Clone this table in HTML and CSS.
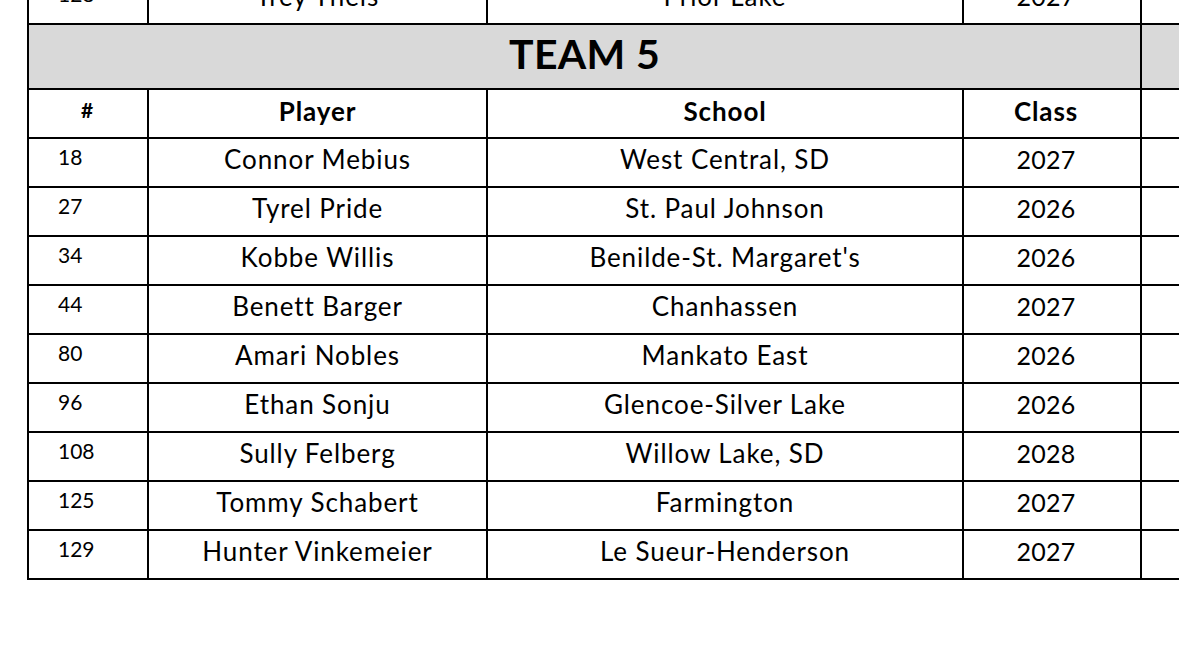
FILE: index.html
```html
<!DOCTYPE html>
<html>
<head>
<meta charset="utf-8">
<link rel="stylesheet" href="styles.css">
</head>
<body>
<div class="sheet">
<table class="roster">
  <colgroup>
    <col class="c-num"><col class="c-player"><col class="c-school"><col class="c-class"><col class="c-extra">
  </colgroup>
  <tr class="row prev">
    <td class="num">128</td><td>Trey Theis</td><td>Prior Lake</td><td class="yr">2027</td><td></td>
  </tr>
  <tr class="team">
    <td colspan="4">TEAM 5</td><td></td>
  </tr>
  <tr class="head">
    <th class="hnum">#</th><th>Player</th><th>School</th><th class="hyr">Class</th><td></td>
  </tr>
  <tr class="row"><td class="num">18</td><td>Connor Mebius</td><td>West Central, SD</td><td class="yr">2027</td><td></td></tr>
  <tr class="row"><td class="num">27</td><td>Tyrel Pride</td><td>St. Paul Johnson</td><td class="yr">2026</td><td></td></tr>
  <tr class="row"><td class="num">34</td><td>Kobbe Willis</td><td>Benilde-St. Margaret's</td><td class="yr">2026</td><td></td></tr>
  <tr class="row"><td class="num">44</td><td>Benett Barger</td><td>Chanhassen</td><td class="yr">2027</td><td></td></tr>
  <tr class="row"><td class="num">80</td><td>Amari Nobles</td><td>Mankato East</td><td class="yr">2026</td><td></td></tr>
  <tr class="row"><td class="num">96</td><td>Ethan Sonju</td><td>Glencoe-Silver Lake</td><td class="yr">2026</td><td></td></tr>
  <tr class="row"><td class="num">108</td><td>Sully Felberg</td><td>Willow Lake, SD</td><td class="yr">2028</td><td></td></tr>
  <tr class="row"><td class="num">125</td><td>Tommy Schabert</td><td>Farmington</td><td class="yr">2027</td><td></td></tr>
  <tr class="row last"><td class="num">129</td><td>Hunter Vinkemeier</td><td>Le Sueur-Henderson</td><td class="yr">2027</td><td></td></tr>
</table>
</div>
</body>
</html>
```
FILE: styles.css
```css
html, body {
  margin: 0;
  padding: 0;
  background: #ffffff;
  overflow: hidden;
  width: 1179px;
  height: 668px;
}
.sheet {
  width: 1179px;
  height: 668px;
  overflow: hidden;
  padding-left: 27px;
  box-sizing: border-box;
}
.roster {
  border-collapse: collapse;
  table-layout: fixed;
  width: 1320px;
  margin-top: -26px;
  font-family: Lato, "Open Sans", sans-serif;
  color: #000;
}
.c-num { width: 120px; }
.c-player { width: 339px; }
.c-school { width: 476px; }
.c-class { width: 178px; }
.c-extra { width: 207px; }
.roster td, .roster th {
  border: 2px solid #000;
  padding: 0;
  text-align: center;
  vertical-align: middle;
  font-size: 26px;
  font-weight: 400;
  letter-spacing: 0.9px;
  white-space: nowrap;
  overflow: hidden;
  box-sizing: border-box;
}
.row td { height: 49px; padding-bottom: 8px; }
.row td.num {
  text-align: left;
  padding-left: 29px;
  font-size: 21px;
  letter-spacing: 0;
  padding-bottom: 12px;
}
.row td.yr { font-size: 25px; letter-spacing: 0.2px; padding-right: 12px; }
.prev td { height: 49px; }
.team td {
  background: #d9d9d9;
  height: 65px;
  font-size: 41px;
  font-weight: 700;
  letter-spacing: 0.3px;
  padding-bottom: 6px;
}
.head th, .head td {
  height: 49px;
  font-weight: 700;
  font-size: 26px;
  letter-spacing: 0.9px;
  padding-bottom: 5px;
}
.head th.hyr { padding-right: 12px; }
.head th.hnum { font-size: 21px; letter-spacing: 0; padding-bottom: 8px; padding-right: 2px; }
```
